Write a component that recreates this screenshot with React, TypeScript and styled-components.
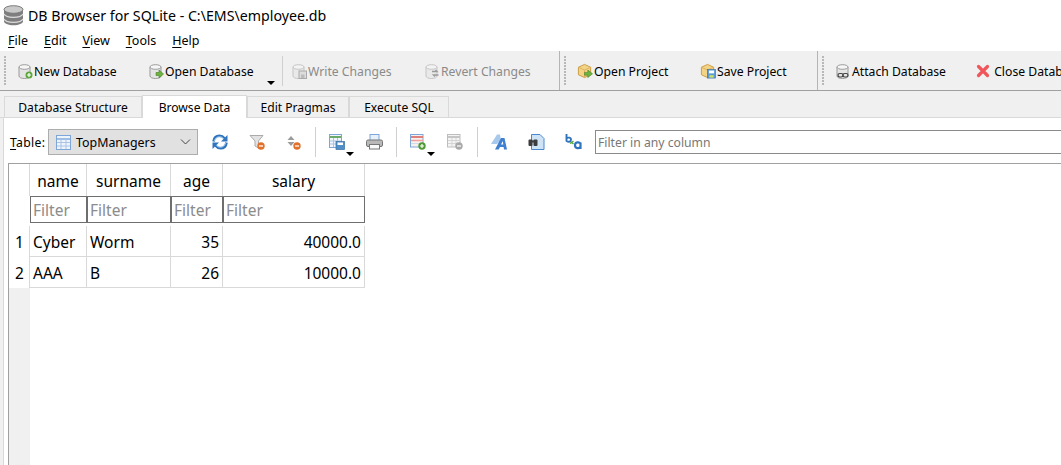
import React from 'react';
import styled, { createGlobalStyle } from 'styled-components';

const Global = createGlobalStyle`
  html, body { margin: 0; padding: 0; background: #fff; }
  body { width: 1061px; height: 465px; overflow: hidden; font-family: "Noto Sans", "Open Sans", sans-serif; }
`;

const Win = styled.div`
  width: 1061px;
  height: 465px;
  display: flex;
  flex-direction: column;
  overflow: hidden;
  background: #fff;
  color: #000;
`;

const TitleBar = styled.div`
  height: 30px;
  display: flex;
  align-items: center;
  gap: 4px;
  padding-left: 3px;
  font-size: 14.2px;
  white-space: nowrap;
`;

const MenuBar = styled.div`
  height: 21px;
  display: flex;
  align-items: center;
  gap: 16px;
  padding-left: 8px;
  font-size: 12.5px;
`;

const U = styled.span`
  text-decoration: underline;
  text-underline-offset: 2px;
`;

const MainBar = styled.div`
  height: 39px;
  display: flex;
  flex: none;
  background: #f0f0f0;
  border-bottom: 1px solid #a0a0a0;
  overflow: hidden;
  white-space: nowrap;
`;

const ToolGroup = styled.div<{ $w: number }>`
  width: ${p => p.$w}px;
  flex: none;
  display: flex;
  align-items: center;
  padding-left: 4px;
  box-sizing: border-box;
  border-right: 1px solid #b4b4b4;
  position: relative;
  &:last-child { border-right: 0; }
`;

const Grip = styled.div`
  width: 3px;
  height: 30px;
  flex: none;
  margin-right: 4px;
  background: radial-gradient(circle at 1px 1px, #b8b8b8 1px, transparent 1.2px) 0 0 / 3px 3px;
`;

const ToolBtn = styled.div<{ $w: number; $off?: boolean }>`
  width: ${p => p.$w}px;
  flex: none;
  display: flex;
  align-items: center;
  padding: 1px 0 0 6px;
  box-sizing: border-box;
  font-size: 12.2px;
  color: ${p => (p.$off ? '#8a8a8a' : '#000')};
  svg { flex: none; margin-right: 1px; }
`;

const Arrow = styled.div`
  width: 0;
  height: 0;
  border-left: 4px solid transparent;
  border-right: 4px solid transparent;
  border-top: 4px solid #000;
`;

const DropArrow = styled(Arrow)`
  position: absolute;
  bottom: 5px;
  left: 267px;
`;

const Divider = styled.div<{ $ml?: number }>`
  width: 1px;
  height: 30px;
  flex: none;
  margin-left: ${p => p.$ml ?? 0}px;
  background: #cfcfcf;
`;

const ToolSep = styled(Divider)`
  margin-right: 2px;
`;

const TabStrip = styled.div`
  height: 27px;
  flex: none;
  display: flex;
  align-items: flex-end;
  background: #f0f0f0;
  padding-left: 4px;
  font-size: 12.1px;
  border-bottom: 1px solid #d9d9d9;
  box-sizing: border-box;
`;

const Tab = styled.div<{ $w: number; $on?: boolean }>`
  width: ${p => p.$w}px;
  height: ${p => (p.$on ? 23 : 21)}px;
  box-sizing: border-box;
  display: flex;
  align-items: center;
  justify-content: center;
  border: 1px solid #d9d9d9;
  border-bottom: 0;
  background: ${p => (p.$on ? '#fff' : '#f0f0f0')};
  margin-bottom: ${p => (p.$on ? -1 : 0)}px;
  position: relative;
`;

const BodyWrap = styled.div`
  flex: 1;
  min-height: 0;
  display: flex;
  padding-left: 3px;
  background: #f0f0f0;
`;

const Body = styled.div`
  flex: 1;
  min-width: 0;
  display: flex;
  flex-direction: column;
  padding-left: 4px;
  background: #fff;
  border-left: 1px solid #d9d9d9;
`;

const TableBar = styled.div`
  height: 45px;
  flex: none;
  box-sizing: border-box;
  padding-top: 3px;
  display: flex;
  align-items: center;
  margin-left: 2px;
  font-size: 12.2px;
  white-space: nowrap;
`;

const TableLabel = styled.span`
  width: 37px;
  flex: none;
  letter-spacing: 0.3px;
`;

const Combo = styled.div`
  width: 150px;
  height: 26px;
  flex: none;
  margin-left: 1px;
  box-sizing: border-box;
  display: flex;
  align-items: center;
  padding: 0 3px 0 7px;
  gap: 5px;
  background: #e1e1e1;
  border: 1px solid #adadad;
  font-size: 12.4px;
`;

const ComboText = styled.span`
  flex: 1;
`;

const IconSlot = styled.div<{ $w: number }>`
  width: ${p => p.$w}px;
  height: 30px;
  flex: none;
  display: flex;
  align-items: center;
  justify-content: center;
  position: relative;
`;

const SlotArrow = styled(Arrow)`
  position: absolute;
  right: 4px;
  bottom: 1px;
`;

const FilterAll = styled.div`
  flex: 1;
  height: 24px;
  margin-left: 1px;
  box-sizing: border-box;
  display: flex;
  align-items: center;
  padding-left: 2px;
  border: 1px solid #8a8a8a;
  border-right: 0;
  color: #777;
  font-size: 12.2px;
`;

const GridFrame = styled.div`
  flex: 1;
  min-height: 0;
  box-sizing: border-box;
  border-top: 1px solid #a0a0a0;
  border-left: 1px solid #a0a0a0;
  display: flex;
`;

const RowHeads = styled.div`
  width: 21px;
  flex: none;
  background: #f0f0f0;
  display: flex;
  flex-direction: column;
`;

const CornerHead = styled.div`
  height: 62px;
  flex: none;
  background: #fff;
`;

const RowHead = styled.div`
  height: 31px;
  flex: none;
  box-sizing: border-box;
  display: flex;
  align-items: center;
  justify-content: center;
  padding-top: 1px;
  background: #fff;
  font-size: 15.5px;
`;

const Grid = styled.div`
  display: grid;
  grid-template-columns: 57px 84px 52px 142px;
  grid-template-rows: 32px 30px 31px 31px;
  align-self: flex-start;
  font-size: 15.5px;
`;

const Head = styled.div`
  box-sizing: border-box;
  display: flex;
  align-items: center;
  justify-content: center;
  padding-top: 2px;
  border-right: 1px solid #d9d9d9;
  border-left: 1px solid #d9d9d9;
  margin-left: -1px;
`;

const FilterCell = styled.div`
  box-sizing: border-box;
  height: 27px;
  border: 1px solid #6e6e6e;
  display: flex;
  align-items: center;
  padding-left: 2px;
  color: #8c8c8c;
  font-size: 15.5px;
  background: #fff;
`;

const Cell = styled.div<{ $num?: boolean }>`
  box-sizing: border-box;
  display: flex;
  align-items: center;
  justify-content: ${p => (p.$num ? 'flex-end' : 'flex-start')};
  padding: 1px 3px 0 3px;
  border-right: 1px solid #d9d9d9;
  border-bottom: 1px solid #d9d9d9;
  margin-left: -1px;
  border-left: 1px solid #d9d9d9;
`;

const Db = ({ fade }: { fade?: boolean }) => (
  <g opacity={fade ? 0.5 : 1}>
    <path d="M2 4v9c0 1.500 2.500 2.500 5.500 2.500S13 14.500 13 13V4z" fill="#e4e4e4" stroke="#9a9a9a" />
    <ellipse cx="7.500" cy="4" rx="5.500" ry="2.300" fill="#f6f6f6" stroke="#9a9a9a" />
  </g>
);

const NewDb = () => (
  <svg width="16" height="16" viewBox="0 0 16 16"><Db /><circle cx="12" cy="12" r="3.500" fill="#5aa83c" /><path d="M12 10v4M10 12h4" stroke="#fff" strokeWidth="1.200" /></svg>
);
const OpenDb = () => (
  <svg width="16" height="16" viewBox="0 0 16 16"><Db /><path d="M8 9.500h3V7l4.500 4-4.500 4v-2.500H8z" fill="#6cb33f" stroke="#4a7f2a" strokeWidth=".6" /></svg>
);
const WriteDb = () => (
  <svg width="16" height="16" viewBox="0 0 16 16"><Db fade /><rect x="8" y="8" width="7.500" height="7.500" fill="#ddd" stroke="#aaa" /><rect x="10" y="11.500" width="3.500" height="3.500" fill="#bbb" /></svg>
);
const RevertDb = () => (
  <svg width="16" height="16" viewBox="0 0 16 16"><Db fade /><path d="M8 8.500h5l-1.500-1.500M14.500 12h-5l1.500 1.500" fill="none" stroke="#9a9a9a" strokeWidth="1.400" /></svg>
);
const Box = () => (
  <>
    <path d="M8 1l6.500 3v8L8 15l-6.500-3V4z" fill="#f3d487" stroke="#c99a3f" />
    <path d="M1.500 4L8 7l6.500-3M8 7v8" fill="none" stroke="#dcb25e" />
  </>
);
const OpenProj = () => (
  <svg width="16" height="16" viewBox="0 0 17 16"><Box /><path d="M8 9.500h3.500V7l5 4-5 4v-2.500H8z" fill="#6cb33f" stroke="#4a7f2a" strokeWidth=".6" /></svg>
);
const SaveProj = () => (
  <svg width="16" height="16" viewBox="0 0 17 16"><Box /><rect x="8" y="6.500" width="8.500" height="9" fill="#5b9bd5" stroke="#3a73a8" strokeWidth=".7" /><rect x="9.500" y="7.500" width="5.500" height="3" fill="#fff" /><rect x="10" y="12.500" width="4.500" height="2.500" fill="#cde06a" /></svg>
);
const AttachDb = () => (
  <svg width="16" height="16" viewBox="0 0 16 16"><Db /><rect x="3" y="10.500" width="5" height="3.500" rx="1.700" fill="none" stroke="#444" strokeWidth="1.200" /><rect x="8" y="10.500" width="5" height="3.500" rx="1.700" fill="none" stroke="#444" strokeWidth="1.200" /></svg>
);
const CloseX = () => (
  <svg width="14" height="14" viewBox="0 0 14 14"><path d="M2.500 2.500l9 9M11.500 2.500l-9 9" stroke="#f0555a" strokeWidth="3.200" strokeLinecap="round" /></svg>
);
const AppDb = () => (
  <svg width="21" height="21" viewBox="0 0 21 21">
    <path d="M1 4.500v12c0 1.800 4.200 3.800 9.500 3.800s9.500-2 9.500-3.800v-12z" fill="#7f7f7f" />
    <ellipse cx="10.500" cy="4.500" rx="9.500" ry="3.800" fill="#c9c9c9" stroke="#7a7a7a" />
    <path d="M1 9c1 2 4.800 3.300 9.500 3.300S19 11 20 9M1 14c1 2 4.800 3.300 9.500 3.300S19 16 20 14" fill="none" stroke="#dcdcdc" strokeWidth="1.300" />
  </svg>
);
const TableIcon = () => (
  <svg width="15" height="15" viewBox="0 0 15 15">
    <rect x=".5" y=".5" width="14" height="14" fill="#eef4fb" stroke="#7ea6d8" />
    <path d="M1 4h13" stroke="#9dbde3" strokeWidth="2" />
    <path d="M5 4v10M10 4v10M1 7.500h13M1 11h13" stroke="#a9c4e6" />
  </svg>
);
const Refresh = () => (
  <svg width="16" height="16" viewBox="0 0 16 16" fill="none">
    <path d="M1.500 7.500C2 3.500 4.500 1.800 7.500 1.800c2.200 0 3.800 1 5.200 2.700" stroke="#2f74bd" strokeWidth="2.600" />
    <path d="M14.500 8.500c-.5 4-3 5.700-6 5.700-2.200 0-3.800-1-5.200-2.700" stroke="#2f74bd" strokeWidth="2.600" />
    <path d="M2.500 7c.6-2.800 2.600-4.200 5-4.200 1.800 0 3 .7 4.300 2.100M13.500 9c-.6 2.800-2.600 4.200-5 4.200-1.800 0-3-.7-4.300-2.100" stroke="#a9d0f2" strokeWidth="1" />
    <path d="M15.500 1v6.500H9z" fill="#2f74bd" />
    <path d="M.5 15V8.500H7z" fill="#2f74bd" />
  </svg>
);
const Minus = () => (
  <>
    <circle cx="12" cy="12" r="3.700" fill="#e2702a" />
    <path d="M10 12h4" stroke="#fff" strokeWidth="1.300" />
  </>
);
const ClearFilter = () => (
  <svg width="16" height="16" viewBox="0 0 16 16"><path d="M1 1.500h13L9.500 7v7L6 12V7z" fill="#e2e2e2" stroke="#ababab" /><Minus /></svg>
);
const ClearSort = () => (
  <svg width="16" height="16" viewBox="0 0 16 16"><path d="M6 2l3.500 4h-7z" fill="#9b9b9b" /><path d="M2.500 8h7L6 12z" fill="#9b9b9b" /><Minus /></svg>
);
const SaveTable = () => (
  <svg width="16" height="16" viewBox="0 0 16 16">
    <rect x=".5" y=".5" width="12" height="13" fill="#f2f6fb" stroke="#7ea6d8" />
    <path d="M1 3h11" stroke="#69a96a" strokeWidth="2" />
    <path d="M4.500 4v9M8.500 4v9M1 7h11M1 10h11" stroke="#a9c4e6" />
    <rect x="7" y="7.500" width="8.500" height="8" fill="#4f8fca" stroke="#3a6f9f" strokeWidth=".7" />
    <rect x="8.500" y="8.500" width="5.500" height="2.500" fill="#fff" />
  </svg>
);
const Printer = () => (
  <svg width="17" height="16" viewBox="0 0 17 16">
    <rect x="4" y=".5" width="9" height="7" fill="#e6effa" stroke="#7ea6d8" />
    <rect x=".5" y="6" width="16" height="6.500" rx="1.500" fill="#b9b9b9" stroke="#777" />
    <rect x="3.500" y="10.500" width="10" height="4.500" fill="#fafafa" stroke="#777" />
  </svg>
);
const AddRec = () => (
  <svg width="16" height="16" viewBox="0 0 16 16">
    <rect x=".5" y=".5" width="12.500" height="12.500" fill="#f6f1ef" stroke="#7ea6d8" />
    <path d="M1 3h12" stroke="#e0807a" strokeWidth="2" />
    <path d="M1 6.500h12" stroke="#eea09a" strokeWidth="1.500" />
    <path d="M1 9.500h12" stroke="#cfdcea" />
    <circle cx="12" cy="12" r="3.700" fill="#4f9a35" />
    <path d="M10 12h4M12 10v4" stroke="#fff" strokeWidth="1.200" />
  </svg>
);
const DelRec = () => (
  <svg width="16" height="16" viewBox="0 0 16 16">
    <rect x=".5" y=".5" width="12.500" height="12.500" fill="#f4f4f4" stroke="#bdbdbd" />
    <path d="M1 3h12" stroke="#c5c5c5" strokeWidth="2" />
    <path d="M1 6.500h12M1 9.500h12M5 4v9M9 4v9" stroke="#d5d5d5" />
    <circle cx="12" cy="12" r="3.700" fill="#a9a9a9" />
    <path d="M10 12h4" stroke="#fff" strokeWidth="1.200" />
  </svg>
);
const FontIcon = () => (
  <svg width="18" height="16" viewBox="0 0 18 16">
    <path d="M0 10L6 .5h3l1 6-4 3.500z" fill="#a9c9ec" />
    <path d="M4 15.500L10 4h3.500l2.500 11.500h-3l-.4-2.500H9l-1.300 2.500zM10 10.500h2.300l-.5-3.500z" fill="#3f80d0" fillRule="evenodd" />
  </svg>
);
const FindDoc = () => (
  <svg width="17" height="16" viewBox="0 0 17 16">
    <path d="M3.500.5h8.500l4 4v11H3.500z" fill="#cfe3f6" stroke="#4a88cc" />
    <rect x=".5" y="5.500" width="4" height="6.500" rx="1" fill="#3c3c3c" />
    <rect x="5.500" y="5.500" width="4" height="6.500" rx="1" fill="#3c3c3c" />
    <rect x="3.500" y="6.500" width="3" height="2" fill="#3c3c3c" />
  </svg>
);
const Replace = () => (
  <svg width="17" height="16" viewBox="0 0 17 16" fill="none">
    <path d="M1.500 0v7.500M1.500 4.500c1-1.300 4.500-1.300 4.500 1.200S2.500 8.200 1.500 7" stroke="#2f74bd" strokeWidth="1.900" />
    <path d="M5 9.500l3.500-2.500M8.500 10L6 8" stroke="#5aa83c" strokeWidth="1.500" />
    <path d="M15.500 9.500c-1.200-1.800-5.500-1.800-5.500 1.800s4.300 3.400 5.500 1.700M15.500 8.500V15" stroke="#2f74bd" strokeWidth="2.200" />
  </svg>
);

const Slots = ({ items }: { items: [React.ReactNode, number, boolean?][] }) => (
  <>
    {items.map(([icon, w, drop], i) => (
      <IconSlot key={i} $w={w}>
        {icon}
        {drop && <SlotArrow />}
      </IconSlot>
    ))}
  </>
);

const rows = [
  { n: 1, name: 'Cyber', surname: 'Worm', age: 35, salary: '40000.0' },
  { n: 2, name: 'AAA', surname: 'B', age: 26, salary: '10000.0' },
];

export default function App() {
  return (
    <Win>
      <Global />
      <TitleBar>
        <AppDb />
        DB Browser for SQLite - C:\EMS\employee.db
      </TitleBar>
      <MenuBar>
        <span><U>F</U>ile</span>
        <span><U>E</U>dit</span>
        <span><U>V</U>iew</span>
        <span><U>T</U>ools</span>
        <span><U>H</U>elp</span>
      </MenuBar>
      <MainBar>
        <ToolGroup $w={560}>
          <Grip />
          <ToolBtn $w={131}><NewDb />New Database</ToolBtn>
          <ToolBtn $w={140}><OpenDb />Open Database</ToolBtn>
          <ToolSep />
          <ToolBtn $w={133} $off><WriteDb />Write Changes</ToolBtn>
          <ToolBtn $w={130} $off><RevertDb />Revert Changes</ToolBtn>
          <DropArrow />
        </ToolGroup>
        <ToolGroup $w={258}>
          <Grip />
          <ToolBtn $w={123}><OpenProj />Open Project</ToolBtn>
          <ToolBtn $w={120}><SaveProj />Save Project</ToolBtn>
        </ToolGroup>
        <ToolGroup $w={243}>
          <Grip />
          <ToolBtn $w={141}><AttachDb />Attach Database</ToolBtn>
          <ToolBtn $w={120}><CloseX />&nbsp;Close Database</ToolBtn>
        </ToolGroup>
      </MainBar>
      <TabStrip>
        <Tab $w={138}>Database Structure</Tab>
        <Tab $w={105} $on>Browse Data</Tab>
        <Tab $w={102}>Edit Pragmas</Tab>
        <Tab $w={100}>Execute SQL</Tab>
      </TabStrip>
      <BodyWrap>
        <Body>
          <TableBar>
            <TableLabel><U>T</U>able:</TableLabel>
            <Combo>
              <TableIcon />
              <ComboText>TopManagers</ComboText>
              <svg width="14" height="6" viewBox="0 0 14 6" fill="none" stroke="#444"><path d="M1 .5l4.500 4.500L10 .5" /></svg>
            </Combo>
            <Slots items={[[<Refresh />, 44], [<ClearFilter />, 29], [<ClearSort />, 44]]} />
            <Divider />
            <Slots items={[[<SaveTable />, 42, true], [<Printer />, 32]]} />
            <Divider $ml={6} />
            <Slots items={[[<AddRec />, 42, true], [<DelRec />, 32]]} />
            <Divider $ml={6} />
            <Slots items={[[<FontIcon />, 43], [<FindDoc />, 31], [<Replace />, 42]]} />
            <FilterAll>Filter in any column</FilterAll>
          </TableBar>
          <GridFrame>
            <RowHeads>
              <CornerHead />
              {rows.map(r => <RowHead key={r.n}>{r.n}</RowHead>)}
            </RowHeads>
            <Grid>
              <Head>name</Head>
              <Head>surname</Head>
              <Head>age</Head>
              <Head>salary</Head>
              {[0, 1, 2, 3].map(i => <FilterCell key={i}>Filter</FilterCell>)}
              {rows.map(r => (
                <React.Fragment key={r.n}>
                  <Cell>{r.name}</Cell>
                  <Cell>{r.surname}</Cell>
                  <Cell $num>{r.age}</Cell>
                  <Cell $num>{r.salary}</Cell>
                </React.Fragment>
              ))}
            </Grid>
          </GridFrame>
        </Body>
      </BodyWrap>
    </Win>
  );
}
